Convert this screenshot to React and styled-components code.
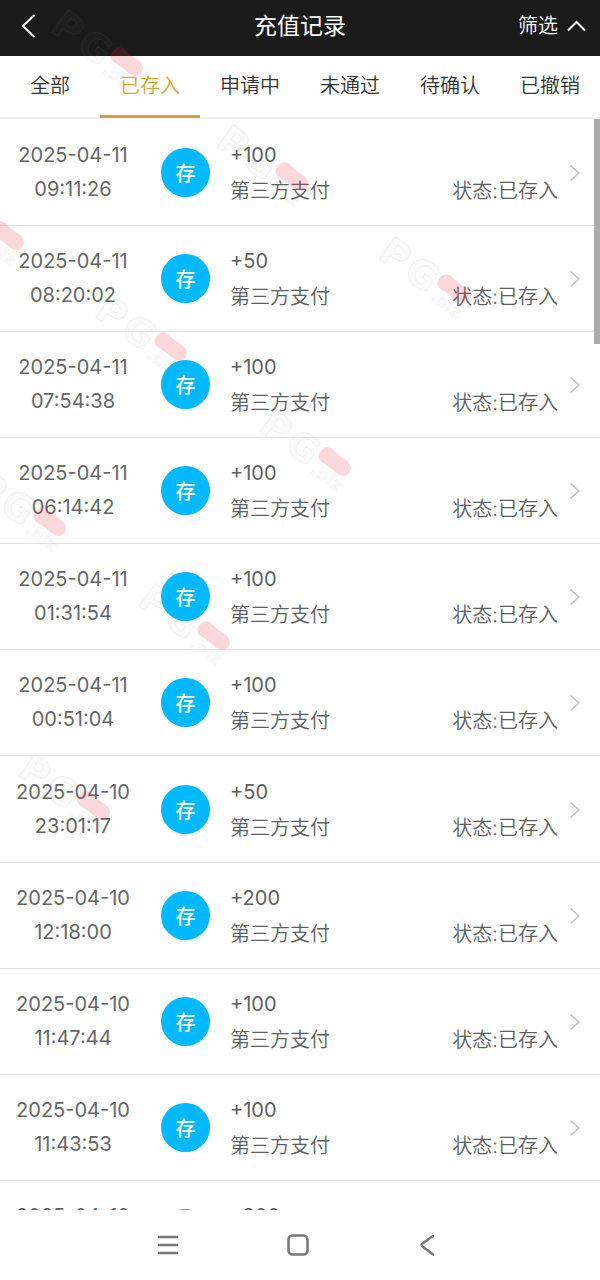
import React from "react";
import styled, { createGlobalStyle } from "styled-components";

const GlobalStyle = createGlobalStyle`
  * {
    box-sizing: border-box;
  }

  body {
    margin: 0;
    background: #fefefe;
    font-family: Inter, "Noto Sans CJK SC", sans-serif;
    font-size: 20px;
    font-weight: 350;
    color: #606060;
  }

  button {
    border: 0;
    padding: 0;
    background: none;
    font: inherit;
    color: inherit;
  }
`;

const Page = styled.div`
  position: relative;
  display: flex;
  flex-direction: column;
  height: 100vh;
  overflow: hidden;
`;

const Header = styled.header`
  display: grid;
  grid-template-columns: 1fr auto 1fr;
  align-items: center;
  height: 56px;
  padding: 0 14px 4px 20px;
  background: #1b1b1b;
  color: #fff;
`;

const Title = styled.h1`
  margin: 0;
  padding-right: 6px;
  font-size: 23px;
  font-weight: 400;
  line-height: 32px;
`;

const BackButton = styled.button`
  display: flex;
  justify-self: start;
`;

const FilterButton = styled.button`
  display: flex;
  align-items: center;
  justify-self: end;
  gap: 9px;
  line-height: 32px;
`;

const Tabs = styled.nav`
  display: grid;
  grid-template-columns: repeat(6, 1fr);
  height: 63px;
  border-bottom: 2px solid #f0f0f0;
`;

const Tab = styled.button`
  height: 62px;
  padding-bottom: 3px;
  border-bottom: 3px solid ${(props) => (props.$active ? "#caa53a" : "transparent")};
  color: ${(props) => (props.$active ? "#dba632" : "#333")};
`;

const ListArea = styled.main`
  position: relative;
  flex: 1;
  min-height: 0;
  overflow: hidden;
`;

const Day = styled.section`
  display: flex;
  flex-direction: column;
  padding-top: 1px;
`;

const Row = styled.button`
  display: grid;
  grid-template-columns: 146px 49px 1fr 12px;
  align-items: center;
  height: 106px;
  padding-right: 19px;
  border-bottom: 1px solid #e2e2e2;
  text-align: left;
`;

const DateTime = styled.time`
  display: flex;
  flex-direction: column;
  padding-bottom: 2px;
  color: #666;
  font-weight: 400;
  line-height: 34px;
  text-align: center;
`;

const Badge = styled.span`
  display: flex;
  align-items: center;
  justify-content: center;
  width: 49px;
  height: 49px;
  margin-left: 15px;
  border-radius: 50%;
  background: #02b9ff;
  color: #fff;
  font-weight: 500;
`;

const Detail = styled.span`
  display: flex;
  flex-direction: column;
  padding: 0 11px 0 35px;
  line-height: 36px;
`;

const Amount = styled.span`
  font-weight: 400;
`;

const Status = styled.span`
  display: flex;
  justify-content: space-between;
`;

const ScrollThumb = styled.div`
  position: absolute;
  top: 0;
  right: 0;
  width: 6px;
  height: 225px;
  background: #ababab;
`;

const NavBar = styled.nav`
  display: flex;
  align-items: center;
  justify-content: center;
  gap: 106px;
  height: 70px;
  padding-right: 5px;
  background: #fefefe;
  color: #777;
`;

const NavButton = styled.button`
  display: flex;
`;

const Watermarks = styled.svg`
  position: absolute;
  inset: 0;
  width: 100%;
  height: 100%;
  pointer-events: none;
`;

const Icon = styled.svg`
  display: block;
  fill: none;
  stroke: currentColor;
  stroke-width: ${(props) => props.$weight || 2};
`;

const tabs = ["全部", "已存入", "申请中", "未通过", "待确认", "已撤销"];

const days = [
  {
    date: "2025-04-11",
    records: [
      ["09:11:26", 100],
      ["08:20:02", 50],
      ["07:54:38", 100],
      ["06:14:42", 100],
      ["01:31:54", 100],
      ["00:51:04", 100],
    ],
  },
  {
    date: "2025-04-10",
    records: [
      ["23:01:17", 50],
      ["12:18:00", 200],
      ["11:47:44", 100],
      ["11:43:53", 100],
      ["11:40:26", 200],
    ],
  },
];

// centre of the red capsule in each mark
const marks = [
  [127, 62],
  [292, 177],
  [8, 236],
  [454, 289],
  [171, 347],
  [335, 462],
  [50, 522],
  [214, 636],
  [94, 806],
];

const Record = ({ date, time, amount }) => (
  <Row type="button">
    <DateTime dateTime={`${date}T${time}`}>
      <span>{date}</span>
      <span>{time}</span>
    </DateTime>
    <Badge>存</Badge>
    <Detail>
      <Amount>+{amount}</Amount>
      <Status>
        <span>第三方支付</span>
        <span>状态:已存入</span>
      </Status>
    </Detail>
    <Icon width="12" height="18" viewBox="0 0 12 18" $weight={1.5} color="#c0c0c0">
      <path d="M1.5 1.5 10 9l-8.500 7.500" />
    </Icon>
  </Row>
);

const Mark = ({ x, y }) => (
  <g transform={`translate(${x} ${y}) rotate(36)`}>
    <g
      fill="#888"
      fillOpacity="0.03"
      stroke="#888"
      strokeOpacity="0.12"
      strokeWidth="1"
      fontFamily="DejaVu Sans"
      fontWeight="700"
    >
      <text x="-82" y="20" fontSize="38">
        P
      </text>
      <text x="-50" y="20" fontSize="38">
        G
      </text>
      <text x="-15" y="23" fontSize="17" strokeWidth="0.5">
        .biz
      </text>
    </g>
    <path
      d="M-11-9Q0-7 8-8 17-8 18 0 18 8 8 8 0 7-10 8-18 8-18 0-18-8-11-9Z"
      fill="#e8283c"
      fillOpacity="0.18"
    />
  </g>
);

export default () => {
  return (
    <Page>
      <GlobalStyle />
      <Header>
        <BackButton type="button" aria-label="返回">
          <Icon width="16" height="26" viewBox="0 0 16 26">
            <path d="M14.500 2 3 13l11.500 11" />
          </Icon>
        </BackButton>
        <Title>充值记录</Title>
        <FilterButton type="button">
          筛选
          <Icon width="19" height="12" viewBox="0 0 19 12">
            <path d="M1 10.500 9.500 2l8.500 8.500" />
          </Icon>
        </FilterButton>
      </Header>
      <Tabs>
        {tabs.map((tab) => (
          <Tab key={tab} type="button" $active={tab === "已存入"}>
            {tab}
          </Tab>
        ))}
      </Tabs>
      <ListArea>
        {days.map(({ date, records }) => (
          <Day key={date}>
            {records.map(([time, amount]) => (
              <Record key={time} date={date} time={time} amount={amount} />
            ))}
          </Day>
        ))}
        <ScrollThumb />
      </ListArea>
      <NavBar>
        <NavButton type="button" aria-label="菜单">
          <Icon width="24" height="24" viewBox="0 0 24 24" $weight={2.5} strokeLinecap="round">
            <path d="M3 4h18M3 12h18M3 20h18" />
          </Icon>
        </NavButton>
        <NavButton type="button" aria-label="主页">
          <Icon width="24" height="24" viewBox="0 0 24 24" $weight={2.5}>
            <rect x="2.500" y="2.500" width="19" height="19" rx="4" />
          </Icon>
        </NavButton>
        <NavButton type="button" aria-label="后退">
          <Icon width="24" height="24" viewBox="0 0 24 24" $weight={2.5} strokeLinecap="round">
            <path d="M17 3 6.500 10.500q-2 1.500 0 3l10.500 8" />
          </Icon>
        </NavButton>
      </NavBar>
      <Watermarks aria-hidden="true">
        {marks.map(([x, y]) => (
          <Mark key={y} x={x} y={y} />
        ))}
      </Watermarks>
    </Page>
  );
};
